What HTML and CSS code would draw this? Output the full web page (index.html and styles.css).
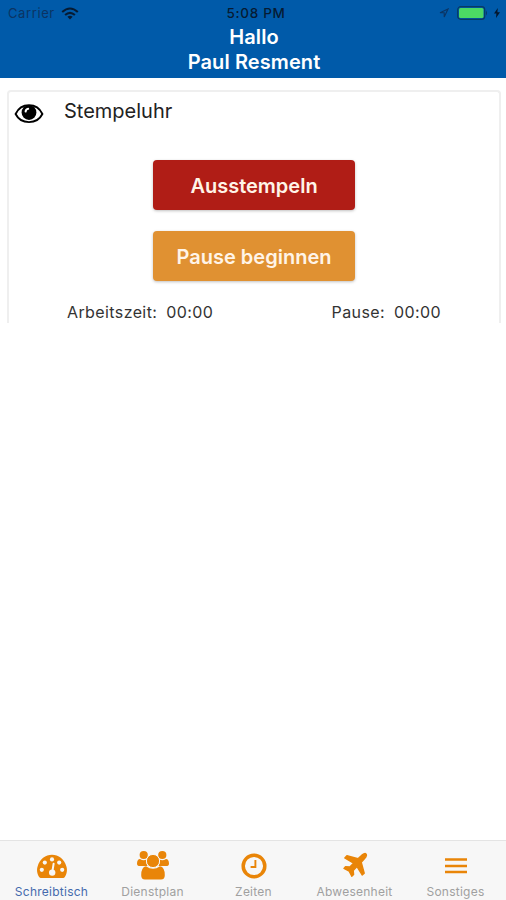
FILE: index.html
```html
<!DOCTYPE html>
<html lang="de">
<head>
    <meta charset="UTF-8">
    <meta name="viewport" content="width=device-width, initial-scale=1.0">
    <title>Schreibtisch</title>
    <link rel="stylesheet" href="styles.css">
</head>
<body>

<header class="header">
    <div class="status-bar">
        <div class="status-left">
            <span class="carrier">Carrier</span>
            <svg class="wifi" width="18" height="13" viewBox="0 0 18 13" fill="none" stroke="#061b33" stroke-width="2.1">
                <path d="M1.2 5 Q9 -2 16.8 5"/>
                <path d="M4.1 8 Q9 3.6 13.9 8"/>
                <path d="M6.4 9.8 Q9 7.6 11.6 9.8 L9 12.6 Z" fill="#061b33" stroke="none"/>
            </svg>
        </div>
        <span class="clock">5:08 PM</span>
        <div class="status-right">
            <svg width="10" height="10" viewBox="0 0 10 10" fill="none" stroke="#0b3463" stroke-width="1.1">
                <path d="M9 1 L1 4.8 H5.2 V9 Z"/>
            </svg>
            <svg class="battery" width="31" height="14" viewBox="0 0 31 14">
                <rect x="0.7" y="0.7" width="27" height="12.6" rx="3" fill="none" stroke="#083a63" stroke-width="1.2"/>
                <rect x="2" y="2" width="24.5" height="10" rx="1.5" fill="#4cd964"/>
                <path d="M29 4.5 Q31 7 29 9.5 Z" fill="#083a63"/>
            </svg>
            <svg width="6" height="10" viewBox="0 0 6 10" fill="#04162b">
                <path d="M3.8 0 L0 5.6 H2.4 L2 10 L6 4.2 H3.4 Z"/>
            </svg>
        </div>
    </div>
    <h1 class="title">Hallo<br>Paul Resment</h1>
</header>

<main class="content">
    <section class="card">
        <div class="card-head">
            <svg width="30" height="21" viewBox="0 0 30 21">
                <path d="M1.6 11 C7 -0.6 23 -0.6 28.4 11 C23 21.8 7 21.8 1.6 11 Z" fill="#fff" stroke="#000" stroke-width="1.9"/>
                <circle cx="15" cy="9.6" r="7.4"/>
                <path d="M11.6 8.6 Q11.8 6.2 14.2 5.8" fill="none" stroke="#fff" stroke-width="2" stroke-linecap="round"/>
            </svg>
            <h2>Stempeluhr</h2>
        </div>
        <div class="buttons">
            <button class="btn btn-out">Ausstempeln</button>
            <button class="btn btn-pause">Pause beginnen</button>
        </div>
        <div class="times">
            <div class="time"><span>Arbeitszeit:</span><span>00:00</span></div>
            <div class="time"><span>Pause:</span><span>00:00</span></div>
        </div>
    </section>
</main>

<nav class="tabs">
    <a class="tab active">
        <svg width="32" height="30" viewBox="0 0 32 30">
            <path d="M3.6 27.6 C0.8 24 0.6 19.8 1.6 16.6 C3.6 9 9.6 4.8 16 4.8 C22.4 4.8 28.4 9 30.4 16.6 C31.4 19.8 31.2 24 28.4 27.6 Q28 28 27.4 28 H4.6 Q4 28 3.6 27.6 Z" fill="#e98508"/>
            <g fill="#f7f7f7">
                <circle cx="5.8" cy="19.8" r="2.1"/>
                <circle cx="8.8" cy="12.6" r="2.1"/>
                <circle cx="16" cy="9.4" r="2.1"/>
                <circle cx="23.2" cy="12.6" r="2.1"/>
                <circle cx="26.2" cy="19.8" r="2.1"/>
                <circle cx="16.2" cy="22.6" r="3.2"/>
            </g>
            <path d="M16.3 22 L17.6 13.8" stroke="#f7f7f7" stroke-width="2" stroke-linecap="round"/>
        </svg>
        <span>Schreibtisch</span>
    </a>
    <a class="tab">
        <svg width="34" height="30" viewBox="0 0 34 30" fill="#e98508">
            <circle cx="7.7" cy="5" r="4.1"/>
            <circle cx="26.3" cy="5" r="4.1"/>
            <path d="M4 9 Q7.5 11.3 10.5 9.5 Q9.5 13.4 11.5 16 H4 Q1 16 1 13.4 Q1.2 9.2 4 9 Z"/>
            <path d="M30 9 Q26.5 11.3 23.5 9.5 Q24.5 13.4 22.5 16 H30 Q33 16 33 13.4 Q32.8 9.2 30 9 Z"/>
            <path d="M10 16.2 Q17 21.5 24 16.2 Q28.8 17 28.8 25.2 Q28.8 29.4 25 29.4 H9 Q5.2 29.4 5.2 25.2 Q5.2 17 10 16.2 Z"/>
            <circle cx="17" cy="11" r="6.6" stroke="#f7f7f7" stroke-width="1"/>
        </svg>
        <span>Dienstplan</span>
    </a>
    <a class="tab">
        <svg width="28" height="30" viewBox="0 0 28 30" fill="none" stroke="#e98508">
            <circle cx="14" cy="16" r="10.8" stroke-width="3.5"/>
            <path d="M15.4 10 V17 H10.6" stroke-width="1.9"/>
        </svg>
        <span>Zeiten</span>
    </a>
    <a class="tab">
        <svg width="26" height="30" viewBox="0 0 26 30">
            <path d="M23.9 3.9 C24.8 4.9 24 7.2 22.2 9 L19.2 12.2 L22.2 23.2 L20.2 25 L15 16.6 L11.2 20.4 L11.6 24.6 L9.8 26.2 L7.2 21.2 L2 18.4 L3.5 16.7 L7.8 17 L11.6 13.2 L2.8 8 L4.9 5.8 L16 8.8 L19.2 5.8 C21 4 23 3 23.9 3.9 Z" fill="#e98508" stroke="#e98508" stroke-width="1.4" stroke-linejoin="round"/>
        </svg>
        <span>Abwesenheit</span>
    </a>
    <a class="tab">
        <svg width="24" height="30" viewBox="0 0 24 30" stroke="#e98508" stroke-width="2.3">
            <path d="M1 9.5 H23 M1 16 H23 M1 22 H23"/>
        </svg>
        <span>Sonstiges</span>
    </a>
</nav>

</body>
</html>
```

FILE: styles.css
```css
* {
    box-sizing: border-box;
}
body {
    margin: 0;
    height: 900px;
    display: flex;
    flex-direction: column;
    overflow: hidden;
    background-color: #fff;
    font-family: Inter, "Liberation Sans", sans-serif;
}
.header {
    height: 78px;
    background-color: #005aa9;
    flex: none;
}
.status-bar {
    display: grid;
    grid-template-columns: 1fr auto 1fr;
    align-items: center;
    height: 25px;
    padding: 1px 6px 0 8px;
    font-size: 13px;
}
.status-left,
.status-right {
    display: flex;
    align-items: center;
}
.status-left {
    gap: 6px;
}
.status-right {
    justify-content: flex-end;
    gap: 6px;
}
.carrier {
    color: #0b3463;
    letter-spacing: 0.6px;
}
.clock {
    padding-left: 4px;
    color: #061b33;
    font-weight: 500;
    font-size: 13.5px;
    letter-spacing: 0.7px;
}
.battery {
    margin-left: 2px;
}
.title {
    margin: 0;
    padding-left: 2px;
    color: #fff;
    font-size: 20px;
    line-height: 25px;
    font-weight: 600;
    letter-spacing: 0.1px;
    text-align: center;
}
.content {
    flex: 1;
    padding: 12px 5px 0 7px;
}
.card {
    height: 233px;
    border: 2px solid #efefef;
    border-bottom: none;
    border-radius: 4px 4px 0 0;
}
.card-head {
    display: flex;
    align-items: center;
    gap: 20px;
    height: 42px;
    padding-left: 5px;
}
.card-head h2 {
    margin: 0 0 4px;
    color: #222;
    font-size: 20px;
    font-weight: 400;
}
.buttons {
    display: flex;
    flex-direction: column;
    align-items: center;
    gap: 21px;
    padding-top: 26px;
}
.btn {
    width: 202px;
    height: 50px;
    padding: 1px 0 0;
    border: none;
    border-radius: 4px;
    color: #fff4e8;
    font-family: inherit;
    font-size: 20px;
    font-weight: 600;
    box-shadow: 0 1px 3px rgba(0, 0, 0, 0.25);
}
.btn-out {
    background-color: #b01d16;
}
.btn-pause {
    background-color: #e09132;
}
.times {
    display: flex;
    justify-content: space-between;
    padding: 21px 58px 0 58px;
    color: #333;
    font-size: 16px;
    line-height: 20px;
    letter-spacing: 0.4px;
}
.time {
    display: flex;
    gap: 9px;
}
.tabs {
    display: grid;
    grid-template-columns: repeat(5, 1fr);
    flex: none;
    height: 60px;
    padding-left: 1px;
    border-top: 1px solid #e4e4e4;
    background-color: #f7f7f7;
}
.tab {
    display: flex;
    flex-direction: column;
    align-items: center;
    padding-top: 9px;
    color: #a0a0a0;
    font-size: 12px;
    line-height: 15px;
    letter-spacing: 0.25px;
}
.tab span {
    margin-top: 4px;
}
.active {
    color: #456aad;
}
```
